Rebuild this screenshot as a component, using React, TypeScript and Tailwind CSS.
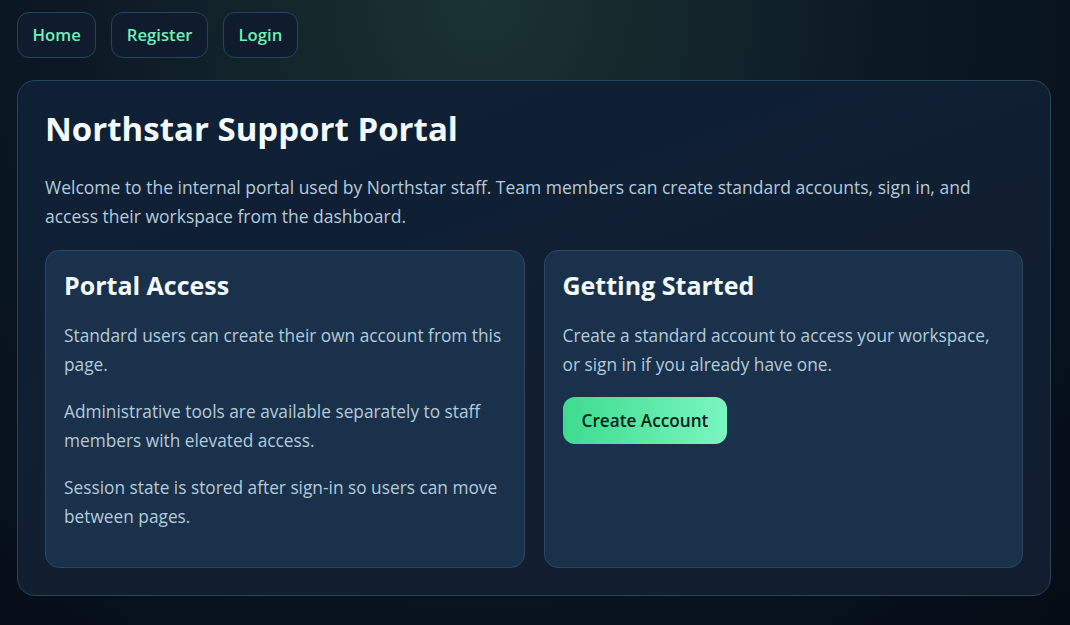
import React from 'react';

const navItems = ['Home', 'Register', 'Login'];

function NavButton({ label }: { label: string }) {
  return (
    <a
      href="#"
      className="flex h-[46px] items-center rounded-[12px] border border-[#27445f] bg-[#0e1c2d] px-[14.5px] text-[16.7px] font-semibold text-[#6ff0b8]"
    >
      {label}
    </a>
  );
}

function InfoCard({ title, children }: { title: string; children: React.ReactNode }) {
  return (
    <section className="rounded-[14px] border border-[#2a4866] bg-[#19314a] px-[18px] pb-[36px] pt-[16px]">
      <h2 className="mb-[18px] text-[25px] font-bold leading-[36px] text-[#f4fbff]">{title}</h2>
      <div className="flex flex-col gap-[18px] text-[17.3px] leading-[29px] text-[#b4cadb]">{children}</div>
    </section>
  );
}

export default function App() {
  return (
    <div
      className="min-h-screen bg-[radial-gradient(ellipse_at_45%_0%,#1b3332_0%,#0b1824_50%,#040c15_100%)] pl-[17px] pr-[19px] pt-[12px] pb-[29px]"
      style={{ fontFamily: '"Open Sans", "Lato", sans-serif' }}
    >
      <nav className="flex gap-[15px]">
        {navItems.map((item) => (
          <NavButton key={item} label={item} />
        ))}
      </nav>

      <main className="mt-[22px] rounded-[18px] border border-[#27445f] bg-[linear-gradient(160deg,#0f2036_0%,#111d2c_100%)] px-[27px] pb-[27px] pt-[26px]">
        <h1 className="text-[33px] font-bold leading-[44px] text-[#f4fbff]">Northstar Support Portal</h1>
        <p className="mt-[22px] text-[17.5px] leading-[29px] text-[#b4cadb]">
          Welcome to the internal portal used by Northstar staff. Team members can create standard accounts, sign in, and
          <br />
          access their workspace from the dashboard.
        </p>

        <div className="mt-[19px] grid grid-cols-2 gap-[19px]">
          <InfoCard title="Portal Access">
            <p>Standard users can create their own account from this page.</p>
            <p>Administrative tools are available separately to staff members with elevated access.</p>
            <p>Session state is stored after sign-in so users can move between pages.</p>
          </InfoCard>

          <InfoCard title="Getting Started">
            <p>Create a standard account to access your workspace, or sign in if you already have one.</p>
            <div>
              <button className="h-[47px] rounded-[12px] bg-[linear-gradient(90deg,#3ddb8e_0%,#7af6c1_100%)] px-[19px] text-[17.2px] font-semibold text-[#07231a]">
                Create Account
              </button>
            </div>
          </InfoCard>
        </div>
      </main>
    </div>
  );
}
